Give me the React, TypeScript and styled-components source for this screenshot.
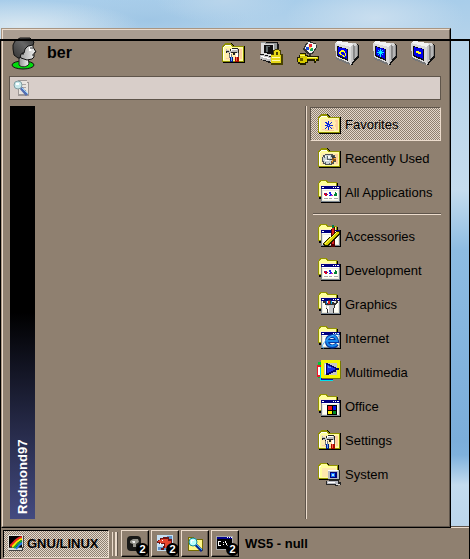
import React, { ReactNode } from 'react';
import styled, { createGlobalStyle, css } from 'styled-components';

const face = '#8f8070';
const light = '#ecdccd';
const dark = '#5f554b';

const GlobalStyle = createGlobalStyle`
  * { box-sizing: border-box; }
  body { margin: 0; font-family: "Liberation Sans", Arial, sans-serif; font-size: 13px; color: #000; }
  button { font: inherit; color: inherit; padding: 0; border: 0; background: none; }
  svg { display: block; flex: none; }
`;

const dither = css`
  background: repeating-conic-gradient(${face} 0 25%, #e4d8cc 0 50%) 0 0 / 2px 2px;
`;

const Desktop = styled.div`
  position: relative;
  min-height: 100vh;
  display: flex;
  flex-direction: column;
  padding-top: 28px;
  background:
    radial-gradient(ellipse 90px 34px at 375px 18px, #c9deef, transparent),
    radial-gradient(ellipse 120px 26px at 20px 26px, #d8e7f1, transparent),
    radial-gradient(ellipse 70px 24px at 225px 0, #b9d5eb, transparent),
    radial-gradient(ellipse 100px 22px at 150px 20px, #9fc6e5, transparent),
    linear-gradient(#a8cdea 0, #b5d3ea 40px, #bfd8eb 120px, #c5dcee 190px, #8dbce2 250px, #7badda 440px, #7fb1dd 455px, #c3dbee 485px, #b6d2ea 100%);
`;

const Menu = styled.main`
  position: relative;
  z-index: 1;
  flex: 1;
  display: flex;
  flex-direction: column;
  margin: 0 19px -2px 1px;
  border: 1px solid;
  border-color: #a89582 #000 #000 #a89582;
  background: ${face};
`;

const MenuInner = styled.div`
  flex: 1;
  display: flex;
  flex-direction: column;
  padding: 0 8px 7px 6px;
  border: 1px solid;
  border-color: ${light} ${dark} ${dark} ${light};
  background: linear-gradient(#aa9e92 10px, transparent 10px);
`;

const Header = styled.header`
  display: flex;
  align-items: center;
  height: 46px;
`;

const UserName = styled.h1`
  flex: 1;
  margin: 0 0 0 9px;
  font-size: 16px;
  line-height: 20px;
`;

const Actions = styled.nav`
  display: flex;
  gap: 14px;
  padding-right: 6px;
`;

const Search = styled.label`
  display: flex;
  align-items: center;
  gap: 4px;
  height: 24px;
  padding: 0 3px;
  border: 1px solid ${dark};
  background: #d8cec9;
`;

const SearchInput = styled.input`
  flex: 1;
  min-width: 0;
  border: 0;
  outline: 0;
  background: none;
  font: inherit;
`;

const Body = styled.div`
  flex: 1;
  display: flex;
  padding-top: 6px;
`;

const Banner = styled.div`
  width: 25px;
  margin-left: 1px;
  padding-top: 5px;
  writing-mode: vertical-rl;
  rotate: 180deg;
  color: #fff;
  font: bold 13px/25px "Liberation Sans", Arial, sans-serif;
  background: linear-gradient(#434a80, #000 50%);
`;

const Results = styled.section`
  flex: 1;
`;

const Categories = styled.nav`
  display: flex;
  flex-direction: column;
  width: 135px;
  padding: 1px 0 0 3px;
  border-left: 1px solid ${light};
  box-shadow: -1px 0 ${dark};
`;

const Category = styled.button<{ $selected?: boolean }>`
  display: flex;
  align-items: center;
  gap: 4px;
  height: 34px;
  padding-left: 6px;
  border: 1px solid transparent;
  white-space: nowrap;
  ${p => p.$selected && css`
    ${dither}
    border-color: ${dark} ${light} ${light} ${dark};
  `}
`;

const Divider = styled.hr`
  width: calc(100% - 3px);
  margin: 4px 0 4px 3px;
  border: 0;
  border-top: 1px solid ${dark};
  border-bottom: 1px solid ${light};
`;

const Taskbar = styled.footer`
  display: flex;
  align-items: center;
  height: 33px;
  padding: 1px 0 0 3px;
  border-top: 1px solid ${dark};
  border-left: 1px solid #000;
  box-shadow: inset 0 1px ${light};
  background: ${face};
`;

const StartButton = styled.button`
  display: flex;
  align-items: center;
  gap: 2px;
  height: 28px;
  width: 106px;
  margin-left: -1px;
  padding-left: 4px;
  border: 1px solid;
  border-color: #000 ${light} ${light} #000;
  font-weight: bold;
  ${dither}
`;

const Grip = styled.span`
  width: 5px;
  height: 24px;
  margin: 0 4px 0 3px;
  border-left: 1px solid ${light};
  border-right: 2px solid ${light};
  box-shadow: 1px 0 ${dark};
`;

const Launchers = styled.div`
  display: flex;
  gap: 2px;
`;

const Launcher = styled.button`
  position: relative;
  display: grid;
  place-items: center;
  width: 28px;
  height: 27px;
  border: 1px solid;
  border-color: ${light} #000 #000 ${light};
  box-shadow: inset -1px -1px ${dark};
`;

const Badge = styled.span`
  position: absolute;
  right: -1px;
  bottom: 0;
  width: 13px;
  height: 13px;
  border-radius: 50%;
  background: #000;
  color: #fff;
  font: bold 11px/13px "Liberation Sans", sans-serif;
  text-align: center;
`;

const WindowTitle = styled.strong`
  margin-left: 6px;
`;

const WorkspaceFrame = styled.div`
  position: absolute;
  z-index: 2;
  inset: 39px 0 0 0;
  border: 1px solid #000;
  border-top-width: 2px;
  border-bottom: 0;
  pointer-events: none;
`;

const Svg = ({ children, w = 24, h = 24 }: { children: ReactNode; w?: number; h?: number }) => (
  <svg width={w} height={h} viewBox={`0 0 ${w} ${h}`} shapeRendering="crispEdges" aria-hidden="true">{children}</svg>
);

const Folder = () => (
  <>
    <path d="M2 5h1V4h1V3h1V2h6v1h1v1h1v1h11v17H2z" fill="#000" />
    <path d="M1 5h1V4h1V3h1V2h6v1h1v1h1v1h11v16H1z" fill="#8f8f00" />
    <path d="M2 6h1V5h1V4h6v1h1v1h11v14H2z" fill="#ffff9c" />
    <path d="M4 7h17v12H4z" fill="#ffedb0" />
    <path d="M13 8h2v1h-2zM18 8h3v10h-2v-3h-1v-3h1v-2h-1zM14 15h3v2h-3zM5 17h3v1H5zM8 18h9v1H8z" fill="#ffd0a0" />
    <path d="M2 6h1V5h1V4h6v1H4v1H3v13H2z" fill="#fff" />
  </>
);

const Tools = () => (
  <>
    <path d="M5 8h1v1h2v1h1V8h2V7h6v1h1v5h-2v-1h-2v2h-2v-2h-2v2H8v-2H5z" fill="#222" />
    <path d="M5 8h1v1h2v1h2V9h6V8h1v4h-1v-1h-6v1H6v-1h2v-1H5z" fill="#bdbdbd" />
    <path d="M10 8h6v1h-5v1h-1z" fill="#fff" />
    <path d="M8 13h3v4H8z" fill="#777" />
    <path d="M9 12h1v5H9zM15 12h2v5h-2z" fill="#fff" />
    <path d="M17 12h1v4h-1z" fill="#555" />
    <path d="M9 16h3v5H9z" fill="#001a8b" />
    <path d="M10 16h1v4h-1z" fill="#57a7f4" />
    <path d="M14 16h4v5h-4z" fill="#a60a00" />
    <path d="M15 16h1v4h-1z" fill="#ff604b" />
  </>
);

const AppFolder = ({ children }: { children: ReactNode }) => (
  <>
    <path d="M2 3h1V2h1V1h7v1h1v1h9v16H2z" fill="#000" />
    <path d="M1 3h1V1h1V0h7v1h1v1h9v15H1z" fill="#949400" />
    <path d="M2 3h1V2h1V1h5v1h1v1h9v13H2z" fill="#ffff9b" />
    <path d="M3 5h15v10H3z" fill="#fff0c0" />
    <path d="M4 6h20v17H4z" fill="#000" />
    <path d="M4 6h19v16H4z" fill="#7d8791" />
    <path d="M5 7h17v14H5z" fill="#fff" />
    <path d="M5 10h17v11H5z" fill="#ecebdc" />
    <path d="M6 11h15v9H6z" fill="#fffff8" />
    <path d="M4 6h19v3H4z" fill="#000080" />
    <path d="M5 7h2v1H5zM16 7h1v1h-1zM18 7h1v1h-1zM20 7h2v1h-2z" fill="#fff" />
    {children}
  </>
);

const Shapes = () => (
  <>
    <path d="M7 13h3v3H8v-1H7z" fill="#d40025" />
    <path d="M8 13h1v1H8zM10 14h1v1h-1z" fill="#2323ca" />
    <path d="M12 12h2v2h1v2h-3v-1h1v-1h-1z" fill="#1625e8" />
    <path d="M14 15h2v1h-2z" fill="#d41fb2" />
    <path d="M18 12h1v1h1v3h-3v-2h1z" fill="#008335" />
    <path d="M7 18h4v1H7zM12 18h3v1h-3zM17 18h4v1h-4z" fill="#aaa" />
  </>
);

const Monitor = ({ glyph }: { glyph: ReactNode }) => (
  <Svg>
    <path d="M16 2l6 1 2 2v12l-5 4-1 3h-3L1 18l1-2 14-11z" fill="#111" />
    <path d="M12 2h8l3 2v11l-5 4V5z" fill="#8c8c8c" />
    <path d="M13 2h7l3 2-3 1-3-1z" fill="#d8d8d8" />
    <path d="M20 5l2-1v11l-2 2z" fill="#b5b5b5" />
    <path d="M0 2l2-2 9 1 8 2-3 4z" fill="#f2f2f2" />
    <path d="M15 6l4-3v16l-3 5h-1z" fill="#c3c3c3" />
    <path d="M18 4l1-1v15l-1 2z" fill="#888" />
    <path d="M0 2l16 4v18L1 17z" fill="#dadada" />
    <path d="M1 16l14 6v2L1 18z" fill="#777" />
    <path d="M2 5l11 3v12L2 15z" fill="#111" />
    <path d="M3 6l9 2v10l-9-4z" fill="#0000ec" />
    {glyph}
  </Svg>
);

const icons: Record<string, ReactNode> = {
  favorites: <Svg><Folder /><path d="M11 9h1v9h-1zM8 13h8v1H8zM9 10h1v1h1v1h2v-1h1v-1h1v1h-1v1h-1v3h1v1h1v1h-1v-1h-1v-1h-3v1H9v1H8v-1h1v-1h1v-3H9v-1H8v-1h1z" fill="#0824dd" /><path d="M11 13h1v1h-1z" fill="#9adfff" /></Svg>,
  recent: (
    <Svg><Folder />
      <path d="M8 8h8v1h2v2h1v5h-2v2h-2v1H8v-1H6v-2H5v-5h1V9h2z" fill="#4c5255" />
      <path d="M8 9h6v2h2v5h-2v2H9v-1H7v-2H6v-4h2z" fill="#cbd4d6" />
      <path d="M10 10h1v3h3v1h-4zM7 11h1v1H7zM8 16h1v1H8zM12 17h1v1h-1z" fill="#59666c" />
      <path d="M8 10h1v1H8zM11 10h2v2h-2zM8 14h4v1H8z" fill="#fff" />
      <path d="M15 10h2v1h1v4h-3v-1h-2v-1h2z" fill="#33383c" />
      <path d="M15 12h4v3h-3v2h-2v-2h1z" fill="#8b5419" />
      <path d="M17 12h2v1h-2zM15 14h1v2h-1z" fill="#f1a33b" />
    </Svg>
  ),
  all: <Svg><AppFolder><Shapes /></AppFolder></Svg>,
  accessories: (
    <Svg><AppFolder>
      <path d="M15 3h3v20h-4V5h1z" fill="#520000" />
      <path d="M15 4h2v16h-2z" fill="#d71d20" />
      <path d="M15 1h2v3h-2z" fill="#00794c" />
      <path d="M20 7h3v3L11 22H7l-1-3z" fill="#222000" />
      <path d="M20 8h2v2L10 21H8l-1-2z" fill="#d9cf00" />
      <path d="M20 8h1L8 20v-1z" fill="#ffff60" />
    </AppFolder></Svg>
  ),
  graphics: (
    <Svg><AppFolder>
      <path d="M6 9h3v2h2V8h3v2h2l2-2h3v3l-3 2v3h-1v5h-7v-4h-1v-4H8v-2H6z" fill="#313131" />
      <path d="M9 13h8v3h-1v5h-5v-5h-2z" fill="#c5c8c9" />
      <path d="M10 14h2v6h-1v-3h-1z" fill="#fff" />
      <path d="M11 9h2v3h-2z" fill="#e51820" />
      <path d="M9 9h1v3H9z" fill="#006ee7" />
      <path d="M14 9h1v3h-1z" fill="#00a1dd" />
      <path d="M17 9h2v2h-2z" fill="#e9e9e9" />
    </AppFolder></Svg>
  ),
  internet: (
    <Svg><AppFolder>
      <g shapeRendering="auto" fill="none">
        <path d="M20 18c-3 4-10 3-10-3s9-7 10 0H10" stroke="#073499" strokeWidth="4" />
        <path d="M20 18c-3 3-10 3-10-3s9-7 10 0H10" stroke="#168bee" strokeWidth="2" />
        <path d="M7 22c-4 0 0-7 6-11s11-4 8 0" stroke="#52b7ff" />
      </g>
    </AppFolder></Svg>
  ),
  multimedia: (
    <Svg>
      <path d="M1 2h4v16H1z" fill="#00c637" />
      <path d="M0 5h5v12H0z" fill="#fff" />
      <path d="M0 5h4v2H1v8h3v2H0z" fill="#ef1725" />
      <path d="M3 7h13v14H3z" fill="#00dff0" />
      <path d="M4 8h2v10h10v2H4z" fill="#0508b8" />
      <path d="M5 1h19v18H5z" fill="#777800" />
      <path d="M4 0h19v18H4z" fill="#f3f500" />
      <path d="M7 3h13v12H7z" fill="#c6c6c6" />
      <path d="M8 4h5v10H8z" fill="#fff" />
      <path d="M9 3h2v1h2v1h2v1h2v1h2v1h3v2h-3v2h-3v1h-2v1h-2v1H9z" fill="#050563" />
      <path d="M10 5h2v1h2v1h2v1h2v2h-2v1h-2v1h-2v1h-2z" fill="#172de4" />
      <path d="M11 6h1v1h2v1h-3z" fill="#4e92ff" />
    </Svg>
  ),
  office: (
    <Svg><AppFolder>
      <path d="M10 11h10v10H10z" fill="#000" />
      <path d="M11 12h4v4h-4z" fill="#f31616" />
      <path d="M16 12h3v4h-3z" fill="#0712ec" />
      <path d="M11 17h4v3h-4z" fill="#fff100" />
      <path d="M16 17h3v3h-3z" fill="#008c25" />
    </AppFolder></Svg>
  ),
  settings: <Svg><Folder /><Tools /></Svg>,
  system: (
    <Svg>
      <path d="M2 3h1V2h1V1h7v1h1v1h10v15H2z" fill="#000" />
      <path d="M1 3h1V2h1V1h7v1h1v1h10v14H1z" fill="#949400" />
      <path d="M2 4h1V3h1V2h6v1h1v1h9v12H2z" fill="#ffff9c" />
      <path d="M5 6h14v9H5z" fill="#ffe8ae" />
      <path d="M2 4h2v1H3v10H2z" fill="#fff" />
      <path d="M11 8h12v10h-1v2h2v3h-3v1h-3v-1H9v-4h3v-1h-1z" fill="#252525" />
      <path d="M11 8h11v9H11zM10 19h11v3H10z" fill="#b8bac2" />
      <path d="M13 10h7v6h-7z" fill="#000078" />
      <path d="M14 11h4v4h-4z" fill="#176cff" />
      <path d="M15 12h2v2h-2z" fill="#a3edff" />
      <path d="M11 8h10v1H11zM11 20h7v1h-7z" fill="#fff" />
      <path d="M19 22h4v1h-4z" fill="#ddd" />
    </Svg>
  ),
  lock: (
    <Svg>
      <path d="M2 1h17v2h1v12l2 2v5H10l-9-4v-5h2V2H2z" fill="#171717" />
      <path d="M2 1h5v1h11v12h-2v2h-3l-8-3V5H3z" fill="#969a99" />
      <path d="M2 2h4v1h9v12H9v-1H5v-1H2z" fill="#dedede" />
      <path d="M5 4h9v9H8v-1H5z" fill="#101010" />
      <path d="M7 5h4v1H9v5H7z" fill="#5c6768" />
      <path d="M1 14h5v1h4v1h4v5h-3v-1H7v-1H3v-1H1z" fill="#c1c1c1" />
      <path d="M2 15h3v1h4v1h2v1H8v-1H4v-1H2z" fill="#fff" />
      <path d="M13 13h1V9h2V8h4v1h2v4h2v11H12V13z" fill="#484100" />
      <path d="M15 10h1V9h4v1h1v4h-2v-3h-2v3h-2zM12 14h10v8H12z" fill="#e6d817" />
      <path d="M13 16h8v1h-8zM13 19h8v1h-8z" fill="#fff9a8" />
    </Svg>
  ),
  key: (
    <Svg>
      <path d="M11 0h3v1h2v1h3v2h1v2l-4 7h-2v2h-2v-2h-2l-4-4V7h1V5h1V3h1V2h2z" fill="#333" />
      <path d="M11 1h2v1h3v1h3v3l-4 6h-3l-4-4V7l2-4h1z" fill="#f4f7f4" />
      <path d="M12 3h3v3h-3z" fill="#eb2738" />
      <path d="M9 6h3v3H9z" fill="#1b49df" />
      <path d="M13 7h3v3h-3z" fill="#15a75a" />
      <path d="M12 6h2v2h-2z" fill="#ffe440" />
      <path d="M3 12h6v2h2v1h11v5h-3v2h-2v-2h-6v2H9v2H3v-1H1v-2H0v-5h2v-2h1z" fill="#222000" />
      <path d="M3 13h5v2h2v1h11v2h-2v2h-1v-2h-8v3H8v1H3v-1H1v-4h2z" fill="#d8cb00" />
      <path d="M3 14h5v1H3zM10 16h10v1H10z" fill="#ffff63" />
      <path d="M3 17h3v3H3z" fill="#665c00" />
    </Svg>
  ),
  refresh: <Monitor glyph={<path d="M6 9h3v1h1v2H9v-1H6v2h1v1H5v-1H4v-2h1v-1h1zM11 12v3h-1v1H8v-1H7v-1h2v1h1v-3z" fill="#ffff16" />} />,
  suspend: <Monitor glyph={<path d="M7 8h1v2h1v-1h1v1H9v1h2v1H9v1h1v1H9v-1H8v3H7v-3H6v1H5v-1h1v-1H4v-1h2v-1H5V9h1v1h1z" fill="#00f4ff" />} />,
  shutdown: <Monitor glyph={<path d="M5 10h3v1h2v2H7v-1H5z" fill="#ffff16" />} />,
};

const UserIcon = () => (
  <svg width="29" height="33" viewBox="0 0 29 33" aria-hidden="true">
    <defs>
      <linearGradient id="hair" x1="0" y1="1" x2="1" y2="0">
        <stop stopColor="#333" /><stop offset=".6" stopColor="#666" /><stop offset="1" stopColor="#333" />
      </linearGradient>
      <linearGradient id="skin">
        <stop stopColor="#929292" /><stop offset="1" stopColor="#f3f3f3" />
      </linearGradient>
    </defs>
    <ellipse cx="14" cy="28" rx="11" ry="4" fill="#00dc0c" stroke="#111" />
    <path d="M10 18v10c3 3 8 2 10-1l-1-7z" fill="url(#skin)" stroke="#222" />
    <path d="M15 8l9-4v6l3 5-2 1v4l-2 2-5 1-6-2-3-5z" fill="url(#skin)" stroke="#111" />
    <path d="M9 21L5 18 4 12V8l2-4 5-3h10l4 4-1 3-5 1-3 3-1 4-3 1-1 4z" fill="url(#hair)" stroke="#111" />
    <path d="M20 10h4l-2 3 1 1h-3z" fill="#fff" />
    <path d="M21 11h3M23 18h2M14 15v3" stroke="#222" />
  </svg>
);

const SearchIcon = () => (
  <Svg w={18} h={18}>
    <path d="M5 1h9v2h2v14H5z" fill="#9f9896" />
    <path d="M6 2h8v2h1v11H6z" fill="#e9e4df" />
    <path d="M9 5h4v1H9zM9 8h4v1H9zM9 11h4v1H9z" fill="#aaa5a2" />
    <g shapeRendering="auto">
      <circle cx="5" cy="6" r="4" fill="#c8e9eb" stroke="#829da2" />
      <path d="M8 9l6 7" stroke="#546eb2" strokeWidth="3" />
      <path d="M9 9l6 6" stroke="#8ed2ff" />
    </g>
    <path d="M3 4h3v2H3z" fill="#fff" />
  </Svg>
);

const StartIcon = () => (
  <Svg w={17} h={17}>
    <path d="M1 1h15v12h-1v3H1z" fill="#444" />
    <path d="M0 0h15v12H0zM0 13h14v2H0z" fill="#deded8" />
    <path d="M1 1h13v11H1z" fill="#000" />
    <g shapeRendering="auto" fill="none" strokeWidth="2">
      <path d="M2 11C5 10 7 3 14 2" stroke="#f22920" />
      <path d="M4 12C7 10 9 5 14 4" stroke="#ffe900" />
      <path d="M6 13c3-3 5-6 8-7" stroke="#18ad37" />
      <path d="M8 14c2-3 4-5 6-6" stroke="#247bea" />
    </g>
  </Svg>
);

const launchers = [
  {
    label: 'Terminal emulator', count: 2, icon: (
      <Svg w={18} h={18}><g shapeRendering="auto">
        <rect x="1" y="1" width="14" height="15" rx="4" fill="#181817" />
        <path d="M4 6l3-2h5l1 3-3 2v3H7V9L4 8z" fill="#96958e" />
        <path d="M6 6h3v2H7z" fill="#eee" />
      </g></Svg>
    ),
  },
  {
    label: 'Image viewer', count: 2, icon: (
      <Svg w={18} h={18}>
        <path d="M1 0h16v16H1z" fill="#c6e0f4" />
        <path d="M11 1h5v7h-5zM2 12h8v3H2z" fill="#5f91c6" />
        <path d="M2 5h2V3h3V2h6v2h3v4h1v5h-3v3h-3v-3H8v2H5v-2h2V9H3V8H1V6h1z" fill="#701515" />
        <path d="M3 5h2V4h7v2h3v3h1v3h-2v-1h-3v2H9V8H4V7H2V6h1z" fill="#e7452e" />
        <path d="M6 5h1v1H6zM4 8h1v2H4zM7 9h1v2H7z" fill="#fff" />
      </Svg>
    ),
  },
  {
    label: 'Find files', count: 0, icon: (
      <Svg w={18} h={18}>
        <path d="M2 2h6v2h9v12H2z" fill="#756c00" />
        <path d="M3 3h4v2h9v10H3z" fill="#fff789" />
        <g shapeRendering="auto">
          <circle cx="7" cy="7" r="4" fill="#baffff" stroke="#138d9a" />
          <path d="M10 10l6 6" stroke="#06258b" strokeWidth="3" />
          <path d="M10 9l6 6" stroke="#37a9ff" />
        </g>
        <path d="M5 5h3v1H6v2H5z" fill="#fff" />
      </Svg>
    ),
  },
  {
    label: 'Command prompt', count: 2, icon: (
      <Svg w={18} h={18}>
        <path d="M0 1h17v14H0z" fill="#aaa" />
        <path d="M1 4h15v10H1z" fill="#000" />
        <path d="M1 2h15v2H1z" fill="#00008b" />
        <path d="M11 2h1v1h-1zM13 2h1v1h-1zM15 2h1v1h-1zM2 6h3v1H3v3h2v1H2zM7 7h1v1H7zM7 9h1v1H7zM9 6h1v2h1v2h1v1h-1v-1h-1V8H9zM13 10h2v1h-2z" fill="#fff" />
      </Svg>
    ),
  },
];

const actions = [
  ['settings', 'Settings'], ['lock', 'Lock screen'], ['key', 'Switch user'],
  ['refresh', 'Restart'], ['suspend', 'Suspend'], ['shutdown', 'Shut down'],
];
const filters = [['favorites', 'Favorites'], ['recent', 'Recently Used'], ['all', 'All Applications']];
const groups = [
  ['accessories', 'Accessories'], ['all', 'Development'], ['graphics', 'Graphics'], ['internet', 'Internet'],
  ['multimedia', 'Multimedia'], ['office', 'Office'], ['settings', 'Settings'], ['system', 'System'],
];

export default function App() {
  return (
    <>
      <GlobalStyle />
      <Desktop>
        <Menu>
          <MenuInner>
            <Header>
              <UserIcon />
              <UserName>ber</UserName>
              <Actions>
                {actions.map(([icon, label]) => <button key={label} aria-label={label}>{icons[icon]}</button>)}
              </Actions>
            </Header>
            <Search>
              <SearchIcon />
              <SearchInput type="text" aria-label="Search applications" />
            </Search>
            <Body>
              <Banner>Redmond97</Banner>
              <Results aria-label="Applications" />
              <Categories>
                {filters.map(([icon, label], i) => <Category key={label} $selected={i === 0}>{icons[icon]}{label}</Category>)}
                <Divider />
                {groups.map(([icon, label]) => <Category key={label}>{icons[icon]}{label}</Category>)}
              </Categories>
            </Body>
          </MenuInner>
        </Menu>
        <Taskbar>
          <StartButton><StartIcon />GNU/LINUX</StartButton>
          <Grip />
          <Launchers>
            {launchers.map(l => (
              <Launcher key={l.label} aria-label={l.label}>
                {l.icon}
                {l.count > 0 && <Badge>{l.count}</Badge>}
              </Launcher>
            ))}
          </Launchers>
          <WindowTitle>WS5 - null</WindowTitle>
        </Taskbar>
        <WorkspaceFrame />
      </Desktop>
    </>
  );
}
